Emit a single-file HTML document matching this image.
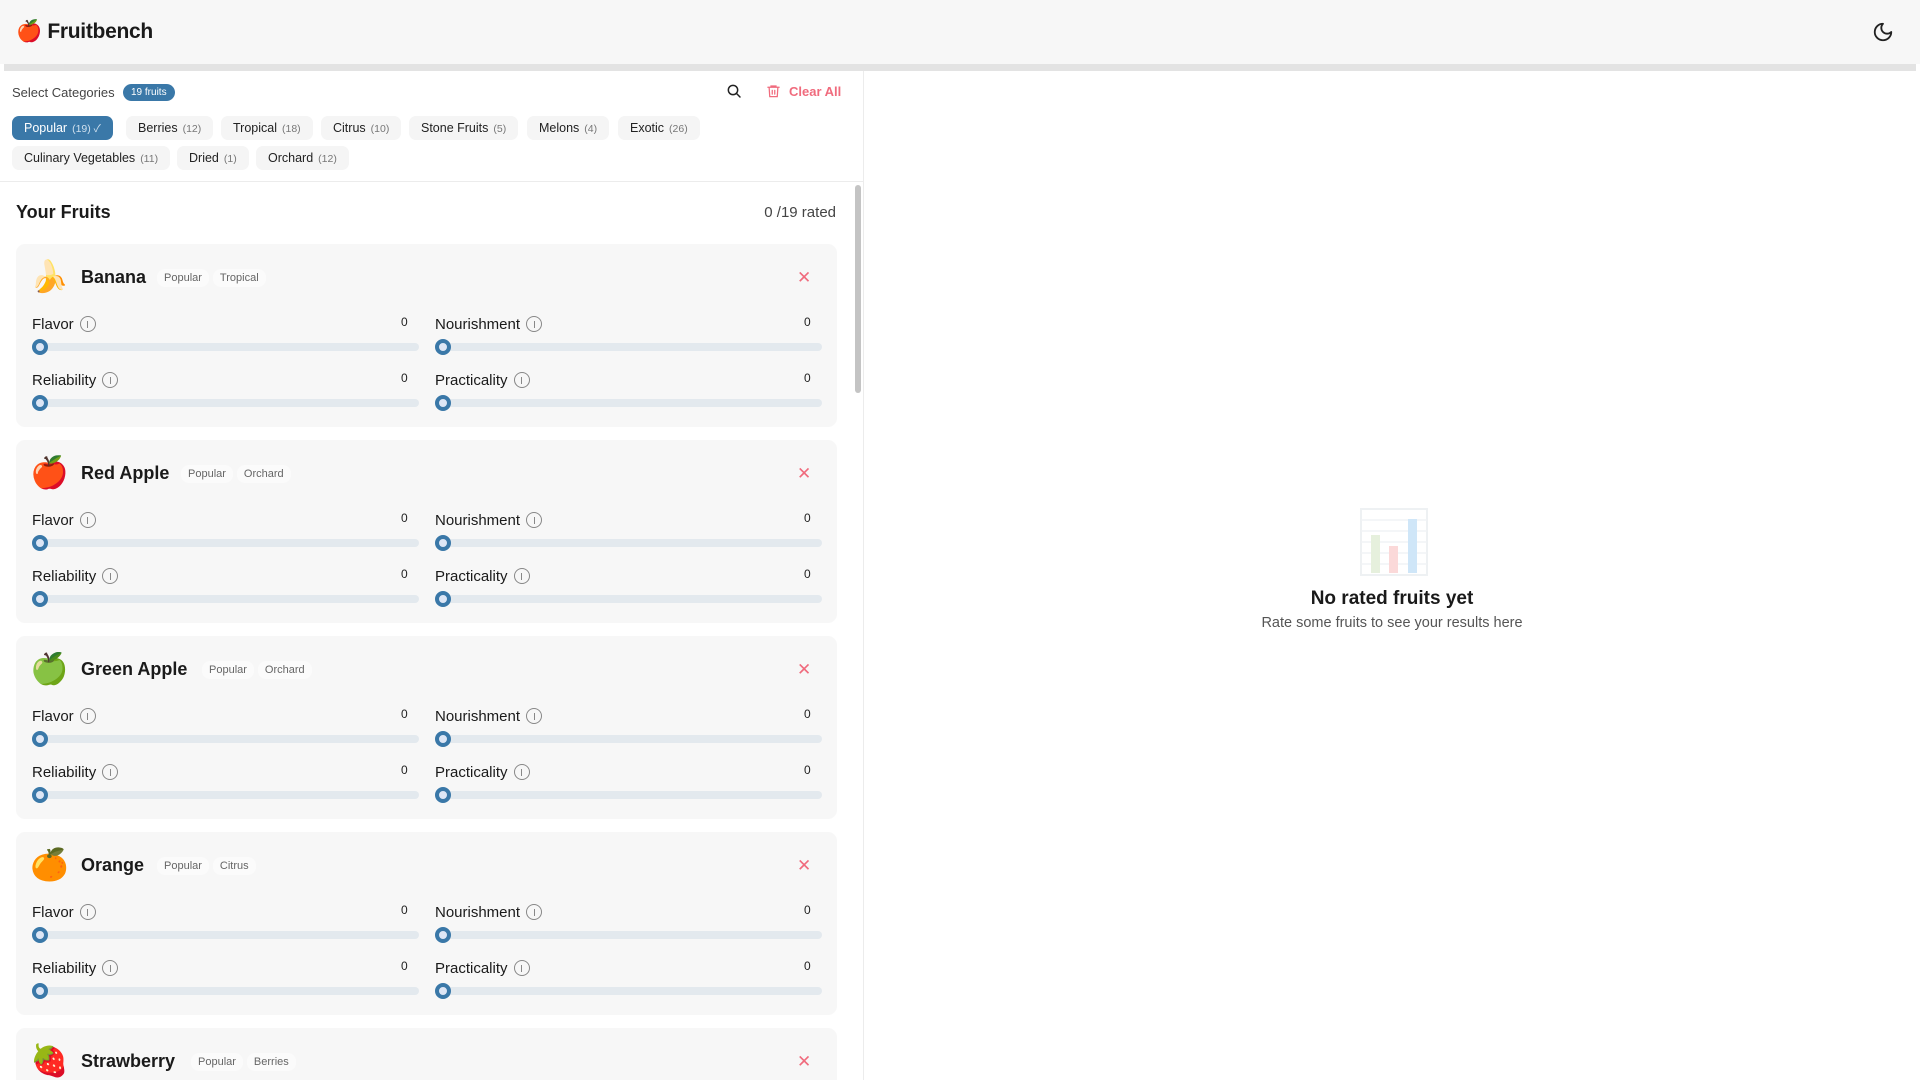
<!DOCTYPE html>
<html><head><meta charset="utf-8"><style>
*{box-sizing:border-box;margin:0;padding:0}
html,body{width:1920px;height:1080px;overflow:hidden}
body{background:#fff;font-family:"Liberation Sans","Noto Sans CJK JP",sans-serif;color:#1a1a1a;position:relative}
.hdr{position:absolute;left:0;top:0;width:1920px;height:64px;background:#f7f7f7}
.logo{position:absolute;left:16px;top:20px;font-size:21px;font-weight:700;letter-spacing:-0.3px}
.bar{position:absolute;left:4px;top:64px;width:1912px;height:7px;background:#e3e3e3}
.left{position:absolute;left:0;top:71px;width:864px;height:1009px;border-right:1px solid #ececec;overflow:hidden}
.selc{position:absolute;left:12px;top:14px;font-size:13px;color:#444;font-weight:500}
.badge{position:absolute;left:123px;top:13px;height:17px;padding:0 8px;border-radius:9px;background:#3a78a8;color:#fff;font-size:10px;line-height:17px}
.clear{position:absolute;top:13px;color:#f06b7d;font-size:13px;font-weight:700}
.chip{position:absolute;height:24px;border-radius:7px;background:#f5f5f5;font-size:12.5px;line-height:24px;padding:0 12px;color:#222;white-space:nowrap}
.chip span{color:#777;font-size:10.5px;margin-left:5px}
.chip.on{background:#3a78a8;color:#fff}.chip.on span{color:#cfe0ee}
.sep{position:absolute;left:0;top:110px;width:864px;height:1px;background:#ececec}
.yf{position:absolute;left:16px;top:131px;font-size:18px;font-weight:700}
.rated{position:absolute;right:27px;top:133px;font-size:15px;color:#444}
.sb{position:absolute;left:855px;top:114px;width:6px;height:208px;border-radius:3px;background:#c4c4c4;z-index:2}
.card{position:absolute;left:16px;width:821px;height:183px;background:#f7f7f7;border-radius:9px}
.emo{position:absolute;left:14px;top:15px;font-size:31px;line-height:36px}
.nm{position:absolute;left:65px;top:23px;font-size:18px;font-weight:700}
.tag{display:inline-block;background:#fbfbfb;border-radius:8px;font-size:11px;color:#666;padding:3px 7px;margin-right:4px}
.tags{position:absolute;top:24px}
.x{position:absolute;left:781px;top:24px;color:#f06b7d;font-size:17px}
.lb{position:absolute;font-size:15px;font-weight:500;color:#1a1a1a}
.i{display:inline-block;width:16px;height:16px;border:1px solid #888;border-radius:50%;vertical-align:-3px;margin-left:6px;position:relative}
.i:after{content:"";position:absolute;left:6.5px;top:4px;width:1px;height:7px;background:#888}
.v{position:absolute;font-size:12px;color:#222}
.tr{position:absolute;height:8px;border-radius:4px;background:#e3e9ee}
.th{position:absolute;width:16px;height:16px;border-radius:50%;border:4px solid #3a78a8;background:#dde6f5}
.empty{position:absolute;left:864px;top:0;width:1056px;text-align:center}
#cards{position:absolute;left:0;top:0;width:863px;height:1080px;overflow:hidden}
</style></head><body>
<div class="hdr"><div class="logo">🍎 Fruitbench</div>
<svg style="position:absolute;left:1872px;top:21px" width="22" height="22" viewBox="0 0 24 24" fill="none" stroke="#222" stroke-width="2" stroke-linecap="round" stroke-linejoin="round"><path d="M12 3a6 6 0 0 0 9 9 9 9 0 1 1-9-9z"/></svg>
</div>
<div class="bar"></div>
<div class="left">
<div class="selc">Select Categories</div><div class="badge">19 fruits</div>
<svg style="position:absolute;left:726px;top:12px" width="16" height="16" viewBox="0 0 24 24" fill="none" stroke="#222" stroke-width="2.2" stroke-linecap="round"><circle cx="10.5" cy="10.5" r="7"/><path d="M16 16l5 5"/></svg>
<svg style="position:absolute;left:766px;top:12px" width="15" height="16" viewBox="0 0 24 24" fill="none" stroke="#f06b7d" stroke-width="2" stroke-linecap="round"><path d="M3 6h18M8 6V4h8v2M5 6l1 15h12l1-15M10 11v6M14 11v6"/></svg>
<div class="clear" style="left:789px">Clear All</div>
<div class="chip on" style="left:12px;top:45px">Popular<span>(19) ✓</span></div>
<div class="chip" style="left:126px;top:45px">Berries<span>(12)</span></div>
<div class="chip" style="left:221px;top:45px">Tropical<span>(18)</span></div>
<div class="chip" style="left:321px;top:45px">Citrus<span>(10)</span></div>
<div class="chip" style="left:409px;top:45px">Stone Fruits<span>(5)</span></div>
<div class="chip" style="left:527px;top:45px">Melons<span>(4)</span></div>
<div class="chip" style="left:618px;top:45px">Exotic<span>(26)</span></div>
<div class="chip" style="left:12px;top:75px">Culinary Vegetables<span>(11)</span></div>
<div class="chip" style="left:177px;top:75px">Dried<span>(1)</span></div>
<div class="chip" style="left:256px;top:75px">Orchard<span>(12)</span></div>
<div class="sep"></div>
<div class="yf">Your Fruits</div><div class="rated">0 /19 rated</div>
<div class="sb"></div>
</div>
<div id="cards"></div>
<div class="empty">
<svg style="position:absolute;left:496px;top:508px" width="68" height="68" viewBox="0 0 68 68"><rect x="1" y="1" width="66" height="66" fill="#fff" stroke="#eef1f3" stroke-width="2"/><g stroke="#f1f3f5" stroke-width="1.5"><path d="M1 12h66M1 23h66M1 34h66M1 45h66M1 56h66"/></g><rect x="11" y="27" width="9" height="38" fill="#e6f0dd"/><rect x="29" y="38" width="9" height="27" fill="#fbd9d9"/><rect x="48" y="11" width="9" height="54" fill="#cfe6f8"/></svg>
<div style="position:absolute;left:0;width:1056px;top:588px;font-size:19px;font-weight:700">No rated fruits yet</div>
<div style="position:absolute;left:0;width:1056px;top:615px;font-size:14.5px;color:#555">Rate some fruits to see your results here</div>
</div>
<script>
var f=[["🍌","Banana","Popular","Tropical",141],["🍎","Red Apple","Popular","Orchard",165],["🍏","Green Apple","Popular","Orchard",186],["🍊","Orange","Popular","Citrus",141],["🍓","Strawberry","Popular","Berries",175]];
var h="";
f.forEach(function(c,k){var t=244+196*k;
h+='<div class="card" style="top:'+t+'px"><div class="emo">'+c[0]+'</div><div class="nm">'+c[1]+'</div><div class="tags" style="left:'+c[4]+'px"><span class="tag">'+c[2]+'</span><span class="tag">'+c[3]+'</span></div><div class="x">✕</div>';
var m=[["Flavor",16,72],["Nourishment",419,72],["Reliability",16,128],["Practicality",419,128]];
m.forEach(function(q){h+='<div class="lb" style="left:'+q[1]+'px;top:'+q[2]+'px">'+q[0]+'<span class="i"></span></div><div class="v" style="left:'+(q[1]+369)+'px;top:'+(q[2]-1)+'px">0</div><div class="tr" style="left:'+q[1]+'px;top:'+(q[2]+27)+'px;width:387px"></div><div class="th" style="left:'+q[1]+'px;top:'+(q[2]+23)+'px"></div>';});
h+='</div>';});
document.getElementById("cards").innerHTML=h;
</script>
</body></html>
